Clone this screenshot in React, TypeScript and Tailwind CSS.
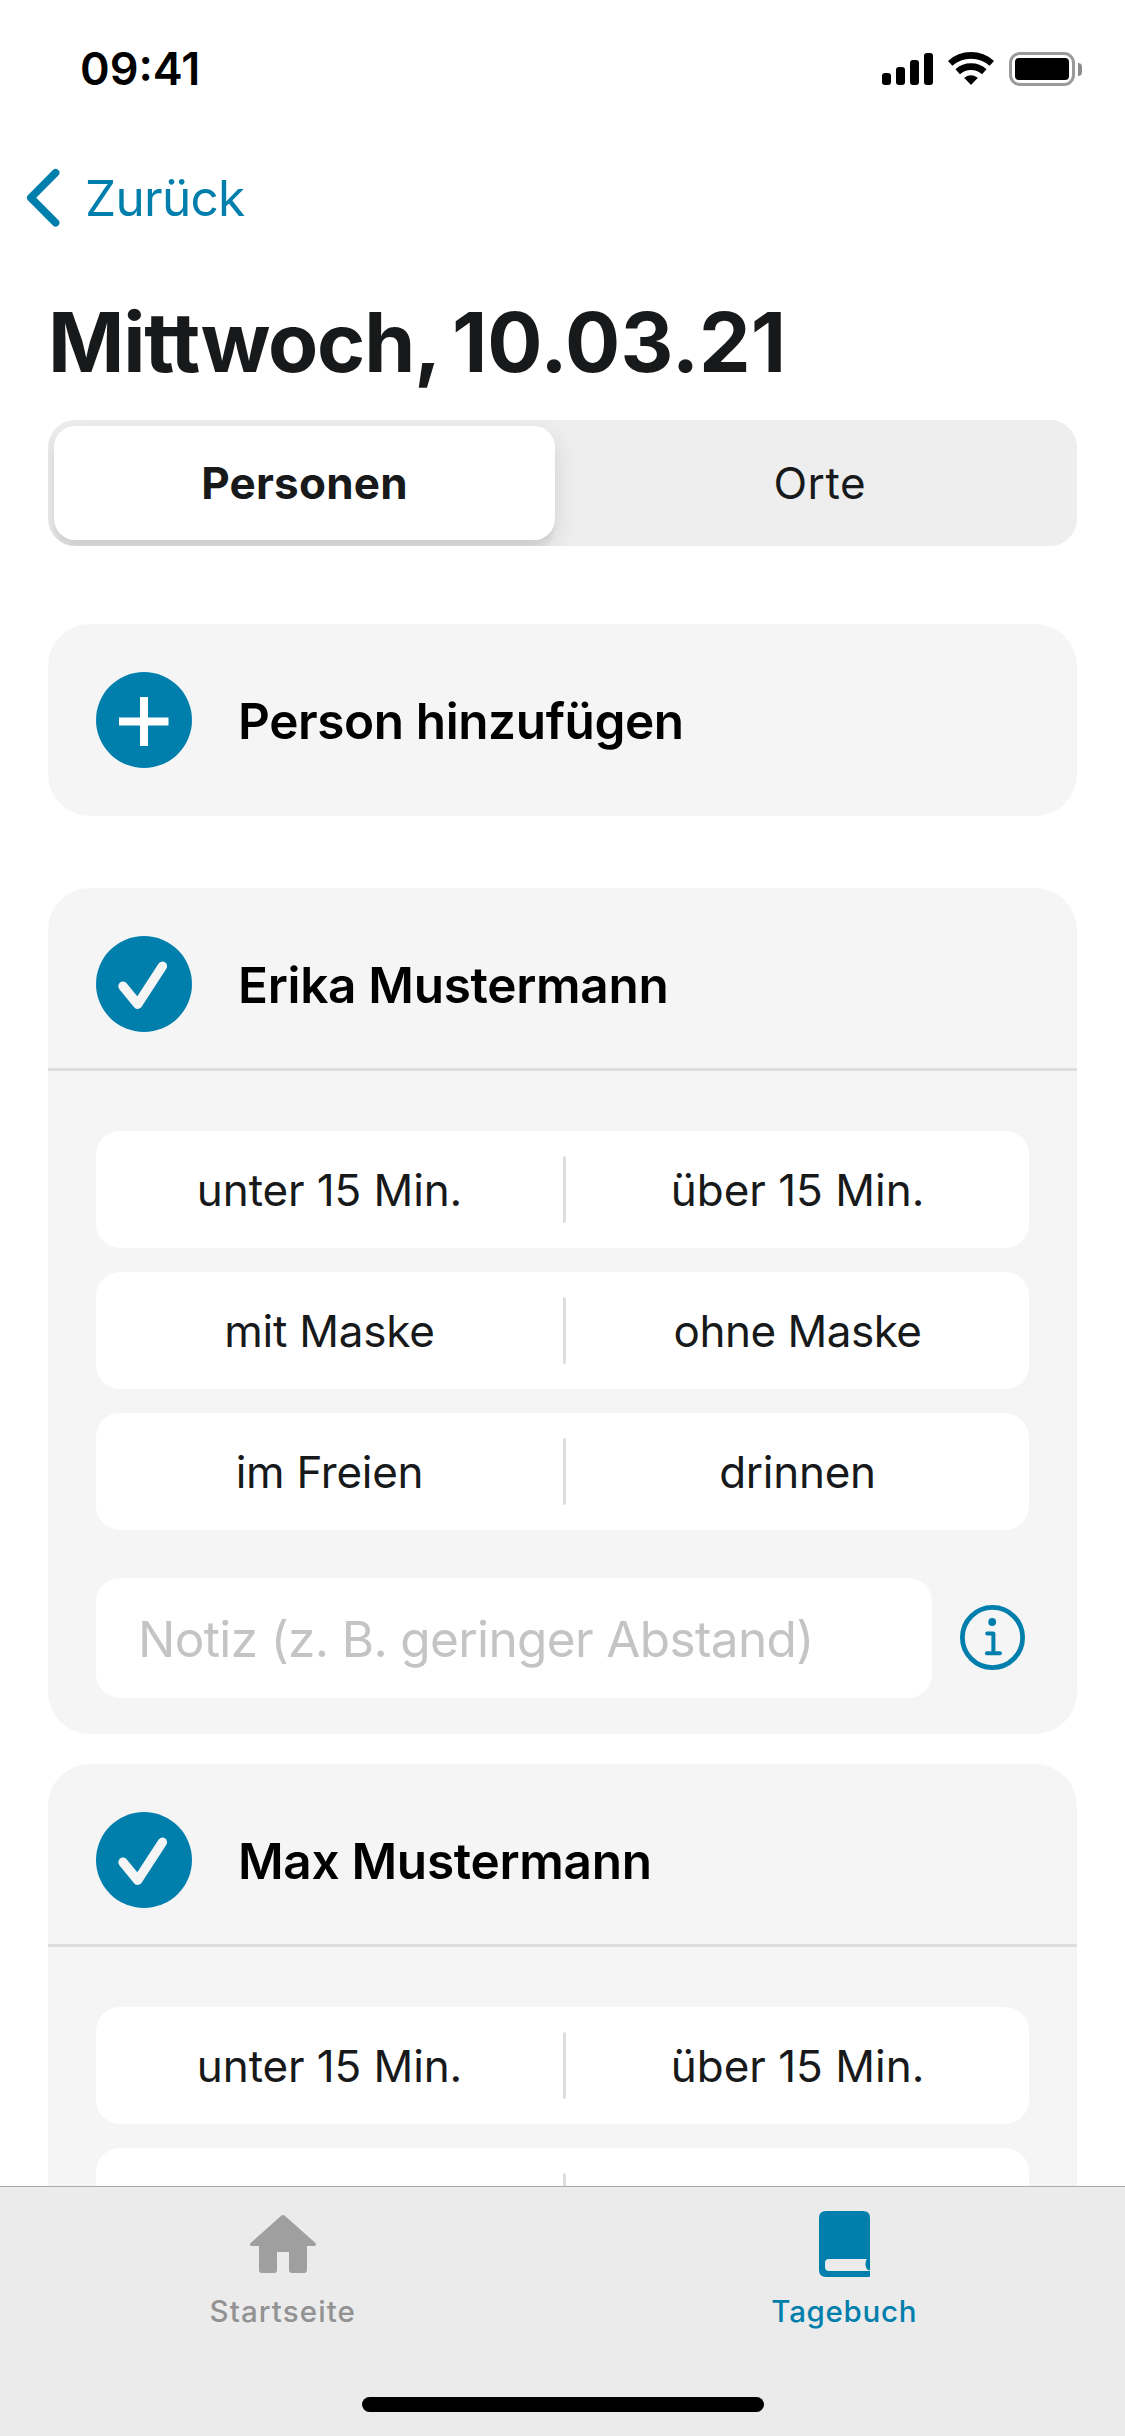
import type { ReactNode } from "react";

type Choice = { label: string; tracking: string };
type ChoicePair = [Choice, Choice];

const duration: ChoicePair = [
  { label: "unter 15 Min.", tracking: "tracking-[-0.1px]" },
  { label: "über 15 Min.", tracking: "tracking-normal" },
];
const mask: ChoicePair = [
  { label: "mit Maske", tracking: "tracking-[-0.23px]" },
  { label: "ohne Maske", tracking: "tracking-[-0.5px]" },
];
const place: ChoicePair = [
  { label: "im Freien", tracking: "tracking-[-0.26px]" },
  { label: "drinnen", tracking: "tracking-[-0.25px]" },
];

function SignalIcon() {
  return (
    <svg width="51" height="34" viewBox="0 0 51 34" fill="#000">
      <rect x="0" y="21" width="9" height="12" rx="3" />
      <rect x="14" y="15" width="9" height="18" rx="3" />
      <rect x="28" y="8" width="9" height="25" rx="3" />
      <rect x="42" y="1" width="9" height="32" rx="3" />
    </svg>
  );
}

function WifiIcon() {
  return (
    <svg width="46" height="34" viewBox="0 0 46 34" fill="none" stroke="#000" strokeWidth="6.6">
      <path d="M2.2 11.4A31.1 31.1 0 0 1 43.8 11.4" />
      <path d="M9.7 19.8A19.8 19.8 0 0 1 36.3 19.8" />
      <path
        d="M17 25.9A11 11 0 0 1 29 25.9L23 32Z"
        fill="#000"
        strokeWidth="1.2"
        strokeLinejoin="round"
      />
    </svg>
  );
}

function BatteryIcon() {
  return (
    <div className="flex items-center gap-[3px]">
      <div className="h-[34px] w-[66px] rounded-[11px] border-3 border-[#9a9a9a] p-[3px]">
        <div className="h-full w-full rounded-[4px] bg-black" />
      </div>
      <div className="h-[13px] w-1 rounded-r-full bg-[#8c8c8c]" />
    </div>
  );
}

function RoundIcon({ children }: { children: ReactNode }) {
  return (
    <svg className="shrink-0" width="96" height="96" viewBox="0 0 96 96" fill="none">
      <circle cx="48" cy="48" r="48" fill="#007fad" />
      {children}
    </svg>
  );
}

function InfoIcon() {
  return (
    <svg className="-mt-px" width="65" height="65" viewBox="0 0 65 65" fill="none" stroke="#007fad">
      <circle cx="32.5" cy="32.5" r="30.1" strokeWidth="4.8" />
      <circle cx="32.2" cy="17" r="3.9" fill="#007fad" stroke="none" />
      <path
        d="M27.2 28.4H33.4V48M26.9 48.2H40"
        strokeWidth="4"
        strokeLinecap="round"
        strokeLinejoin="round"
      />
    </svg>
  );
}

function ChoiceRow({ options }: { options?: ChoicePair }) {
  return (
    <div className="flex h-[117px] items-center rounded-[24px] bg-white text-[44px] text-[#17191a]">
      <div className={`w-[467px] text-center ${options?.[0].tracking ?? ""}`}>
        {options?.[0].label}
      </div>
      <div className="h-[67px] w-[3px] rounded-full bg-[#dedede]" />
      <div className={`flex-1 text-center ${options?.[1].tracking ?? ""}`}>
        {options?.[1].label}
      </div>
    </div>
  );
}

function PersonCard({ name, children }: { name: string; children: ReactNode }) {
  return (
    <section className="shrink-0 rounded-[42px] bg-[#f5f5f5]">
      <div className="flex h-[183px] items-center gap-[46px] border-b-3 border-[#dedede] px-12 pt-3">
        <RoundIcon>
          <path
            d="M27 50.2L41.7 68.2L66.4 30.3"
            stroke="#f5f5f5"
            strokeWidth="9.4"
            strokeLinecap="round"
            strokeLinejoin="round"
          />
        </RoundIcon>
        <h2 className="pt-0.5 text-[49.5px] leading-[60px] font-semibold tracking-[-0.3px] text-black">
          {name}
        </h2>
      </div>
      <div className="flex flex-col gap-6 px-12 pt-[60px]">{children}</div>
    </section>
  );
}

export default function App() {
  return (
    <div className="flex h-[2436px] w-[1125px] flex-col overflow-hidden bg-white font-['Inter','Liberation_Sans',sans-serif]">
      <header className="shrink-0">
        <div className="flex h-[138px] items-center justify-between pr-[43px] pl-20">
          <span className="text-[45px] font-semibold text-black">09:41</span>
          <div className="flex items-center gap-[15px]">
            <SignalIcon />
            <WifiIcon />
            <BatteryIcon />
          </div>
        </div>
        <button className="flex h-[120px] items-center gap-6 pl-[26px] text-[#007fad]">
          <svg width="35" height="60" viewBox="0 0 35 60" fill="none">
            <path
              d="M29.6 4.8L4.800 29.8L29.6 54.8"
              stroke="currentColor"
              strokeWidth="7.6"
              strokeLinecap="round"
              strokeLinejoin="round"
            />
          </svg>
          <span className="text-[49.5px] tracking-[-0.7px]">Zurück</span>
        </button>
        <h1 className="h-[162px] pt-[7px] pl-12 text-[82px] leading-[155px] font-bold tracking-[-1.2px] text-[#17191a] [word-spacing:-4px]">
          Mittwoch, <span className="tracking-normal">10.03.21</span>
        </h1>
      </header>

      <main className="flex min-h-0 flex-1 flex-col overflow-hidden px-12">
        <div className="flex h-[126px] shrink-0 overflow-hidden rounded-[27px] bg-[#eeeeee] text-[44px] text-[#17191a]">
          <div className="w-1/2 py-1.5 pr-[7.5px] pl-1.5">
            <div className="flex h-full items-center justify-center rounded-[21px] bg-white font-bold tracking-[0.2px] shadow-[0_9px_24px_rgba(0,0,0,0.12),0_9px_3px_rgba(0,0,0,0.04)]">
              Personen
            </div>
          </div>
          <div className="flex w-1/2 items-center justify-center tracking-[0.55px]">Orte</div>
        </div>

        <div className="mt-[78px] flex h-[192px] shrink-0 items-center gap-[46px] rounded-[42px] bg-[#f5f5f5] px-12">
          <RoundIcon>
            <path d="M23 49.5H72.5M48 25V74" stroke="#fff" strokeWidth="8" />
          </RoundIcon>
          <span className="pt-0.5 text-[49.5px] leading-[60px] font-semibold tracking-[-0.4px] text-black">
            Person hinzufügen
          </span>
        </div>

        <div className="mt-[72px] flex flex-col gap-[30px]">
          <PersonCard name="Erika Mustermann">
            <ChoiceRow options={duration} />
            <ChoiceRow options={mask} />
            <ChoiceRow options={place} />
            <div className="flex items-center gap-7 pt-6 pb-9">
              <div className="flex h-[120px] w-[836px] items-center rounded-[24px] bg-white pt-0.5 pl-[42px] text-[49.5px] tracking-[-0.63px] whitespace-nowrap text-[#c4c4c6]">
                Notiz (z. B. geringer Abstand)
              </div>
              <InfoIcon />
            </div>
          </PersonCard>
          <PersonCard name="Max Mustermann">
            <ChoiceRow options={duration} />
            <ChoiceRow />
          </PersonCard>
        </div>
      </main>

      <footer className="flex h-[250px] shrink-0 flex-col items-center justify-between border-t border-[#acacac] bg-[#ebebeb] pb-6">
        <nav className="flex w-full pt-6 pl-0.5 text-[29.5px] leading-9 font-medium">
          <div className="flex flex-1 flex-col items-center gap-[15px] text-[#929292]">
            <svg width="66" height="67" viewBox="0 0 66 67" fill="#9f9f9f">
              <path d="M31.2 4.8Q33 3 34.8 4.8L65.4 32Q67 34 64.5 35H57V58.5Q57 62 54 62H42Q39 62 39 59V41H27V59Q27 62 24 62H12Q9 62 9 59V35H1.5Q-1 34 .6 32Z" />
            </svg>
            <span className="tracking-[1.1px]">Startseite</span>
          </div>
          <div className="flex flex-1 flex-col items-center gap-[15px] text-[#007fad]">
            <svg width="51" height="67" viewBox="0 0 51 67" fill="currentColor">
              <path
                fillRule="evenodd"
                d="M7 0H44Q51 0 51 7V59.3H49Q44.5 54 47.8 48H10Q6 48 6 52V56Q6 60 10 60H51V65Q51 66 50 66H7Q0 66 0 59V7Q0 0 7 0Z"
              />
            </svg>
            <span className="tracking-[0.7px]">Tagebuch</span>
          </div>
        </nav>
        <div className="h-[15px] w-[402px] rounded-full bg-black" />
      </footer>
    </div>
  );
}
